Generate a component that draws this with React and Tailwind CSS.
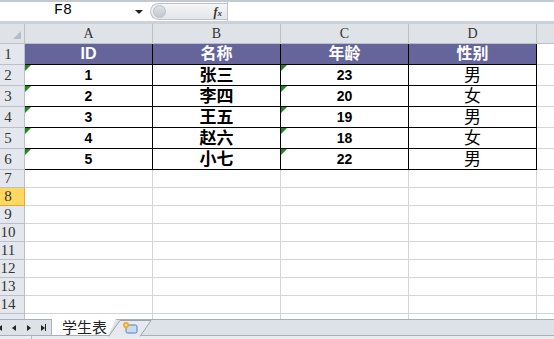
const cols = ['A', 'B', 'C', 'D'];

const data = [
  ['1', '张三', '23', '男'],
  ['2', '李四', '20', '女'],
  ['3', '王五', '19', '男'],
  ['4', '赵六', '18', '女'],
  ['5', '小七', '22', '男'],
];

const mono = "font-['Liberation_Serif','Noto_Sans_CJK_SC',serif]";
const cjk = "font-['Liberation_Sans','Noto_Sans_CJK_SC',sans-serif]";

function RowHead({ n, h, selected }) {
  return (
    <div
      className={`w-[25px] shrink-0 border-r border-b flex items-center justify-center pr-[8px] text-[15px] leading-none text-[#333] ${mono} ${h} ${
        selected ? 'bg-[#ffd862] border-[#e1a93a]' : 'bg-[#e4e8ee] border-[#b9c0ca]'
      }`}
    >
      {n}
    </div>
  );
}

function Flag() {
  return <div className="absolute left-0 top-0 w-[6px] h-[6px] bg-[#1a8a1a] [clip-path:polygon(0_0,100%_0,0_100%)]" />;
}

export default function App() {
  return (
    <div className={`w-[554px] h-[339px] bg-white overflow-hidden flex flex-col ${cjk}`}>
      {/* formula bar */}
      <div className="h-[24px] shrink-0 flex border-t-2 border-t-[#c4c9d0] border-b-[3px] border-b-[#ccd1d8] bg-white">
        <div className="w-[124px] flex items-center justify-center pl-[2px] text-[15px] text-black font-['Liberation_Mono',monospace]">
          F8
        </div>
        <div className="w-[26px] flex items-center justify-end pr-[7px]">
          <div className="w-0 h-0 border-l-[4px] border-r-[4px] border-t-[4px] border-l-transparent border-r-transparent border-t-[#222]" />
        </div>
        <div className="w-[77px] my-[1px] rounded-l-full border border-r-0 border-[#bdc3cb] bg-gradient-to-b from-[#f4f5f7] to-[#e3e6ea] flex items-center justify-between pl-[2px] pr-[5px]">
          <div className="w-[13px] h-[13px] rounded-full bg-gradient-to-b from-[#dfe2e6] to-[#c4c9cf] border border-[#b8bec6]" />
          <span className="text-[12px] italic font-bold text-[#333] font-['Liberation_Serif',serif]">
            f<span className="text-[9px]">x</span>
          </span>
        </div>
        <div className="flex-1 border-l border-[#bdc3cb] bg-white" />
      </div>

      {/* column headers */}
      <div className="h-[20px] shrink-0 flex bg-[#dfe3e8]">
        <div className="w-[25px] shrink-0 border-r border-b border-[#b9c0ca] relative">
          <div className="absolute right-[3px] bottom-[4px] w-[8px] h-[8px] bg-[#b8bec6] [clip-path:polygon(100%_0,100%_100%,0_100%)]" />
        </div>
        {cols.map((c) => (
          <div
            key={c}
            className={`w-[128px] shrink-0 border-r border-b border-[#b9c0ca] flex items-center justify-center text-[14px] text-[#333] ${mono}`}
          >
            {c}
          </div>
        ))}
        <div className="flex-1 border-b border-[#b9c0ca]" />
      </div>

      {/* header row 1 */}
      <div className="h-[21px] shrink-0 flex">
        <RowHead n="1" h="h-[21px]" />
        {['ID', '名称', '年龄', '性别'].map((t) => (
          <div
            key={t}
            className="w-[128px] shrink-0 border-r border-b border-black bg-[#65659b] flex items-center justify-center text-white font-bold text-[16px] leading-none"
          >
            {t}
          </div>
        ))}
        <div className="flex-1 border-b border-[#d4d4d4]" />
      </div>

      {/* data rows */}
      {data.map((r, i) => (
        <div key={i} className="h-[21px] shrink-0 flex">
          <RowHead n={String(i + 2)} h="h-[21px]" />
          <div className="relative w-[128px] shrink-0 border-r border-b border-black flex items-center justify-center font-bold text-[14px] leading-none text-black">
            <Flag />
            {r[0]}
          </div>
          <div className="w-[128px] shrink-0 border-r border-b border-black flex items-center justify-center font-bold text-[17px] leading-none text-black">
            {r[1]}
          </div>
          <div className="relative w-[128px] shrink-0 border-r border-b border-black flex items-center justify-center font-bold text-[14px] leading-none text-black">
            <Flag />
            {r[2]}
          </div>
          <div className="w-[128px] shrink-0 border-r border-b border-black flex items-center justify-center text-[17px] leading-none text-black">
            {r[3]}
          </div>
          <div className="flex-1 border-b border-[#d4d4d4]" />
        </div>
      ))}

      {/* empty rows */}
      {[7, 8, 9, 10, 11, 12, 13, 14].map((n) => (
        <div key={n} className="h-[18px] shrink-0 flex">
          <RowHead n={String(n)} h="h-[18px]" selected={n === 8} />
          {cols.map((c) => (
            <div key={c} className="w-[128px] shrink-0 border-r border-b border-[#d4d4d4]" />
          ))}
          <div className="flex-1 border-b border-[#d4d4d4]" />
        </div>
      ))}
      <div className="h-[5px] shrink-0 flex">
        <div className="w-[25px] shrink-0 border-r border-[#b9c0ca] bg-[#e4e8ee]" />
        {cols.map((c) => (
          <div key={c} className="w-[128px] shrink-0 border-r border-[#d4d4d4]" />
        ))}
      </div>

      {/* sheet tabs */}
      <div className="h-[17px] shrink-0 flex items-stretch border-t border-t-[#a6aeb9] border-b border-b-[#a9b0bb] bg-[#dde2e9] relative">
        <div className="w-[52px] shrink-0 flex items-center justify-between pr-[5px] border-r border-[#aab1bc]">
          <div className="flex items-center -ml-[3px]">
            <div className="w-[1px] h-[7px] bg-[#222]" />
            <div className="w-0 h-0 border-y-[3.5px] border-r-[4px] border-y-transparent border-r-[#222]" />
          </div>
          <div className="w-0 h-0 border-y-[3.5px] border-r-[4px] border-y-transparent border-r-[#222]" />
          <div className="w-0 h-0 border-y-[3.5px] border-l-[4px] border-y-transparent border-l-[#222]" />
          <div className="flex items-center">
            <div className="w-0 h-0 border-y-[3.5px] border-l-[4px] border-y-transparent border-l-[#222]" />
            <div className="w-[1px] h-[7px] bg-[#222]" />
          </div>
        </div>
        <div className="relative -mt-[1px] w-[64px] shrink-0 bg-white [clip-path:polygon(0_0,100%_0,88%_100%,0_100%)] flex items-center pl-[10px] text-[15px] leading-none text-[#222]">
          学生表
        </div>
        <div className="relative w-[44px] -ml-[8px] shrink-0 flex items-center justify-center">
          <svg width="44" height="17" className="absolute inset-0">
            <path d="M0.5 16.5 L12 0.5 L43 0.5 L32 16.5" fill="#e6eaf0" stroke="#9aa3af" />
          </svg>
          <svg width="18" height="14" viewBox="0 0 18 14" className="relative">
            <rect x="5" y="4" width="11" height="8" rx="1.5" fill="#c7dcf3" stroke="#5e7fa8" />
            <circle cx="5" cy="4" r="3" fill="#f6a821" />
            <circle cx="5" cy="4" r="1.3" fill="#ffe27a" />
          </svg>
        </div>
      </div>
      <div className="flex-1 flex bg-[#e9ecf0]">
        <div className="w-[32px] border-r border-[#b5bcc6]" />
      </div>
    </div>
  );
}
